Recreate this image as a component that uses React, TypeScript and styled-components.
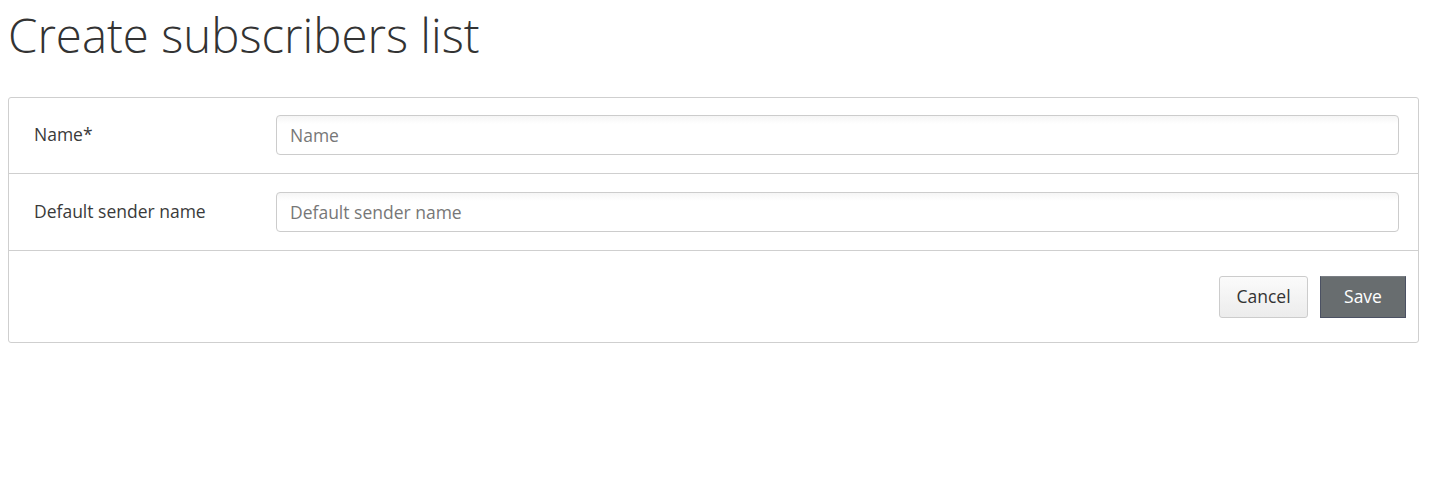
import React from "react";
import styled, { createGlobalStyle } from "styled-components";

const Global = createGlobalStyle`
  html, body { margin: 0; padding: 0; background: #fff; }
  body { font-family: "Open Sans", "Liberation Sans", sans-serif; color: #333; }
  * { box-sizing: border-box; }
`;

const Page = styled.div`
  padding: 0 32px 0 8px;
`;

const Title = styled.h1`
  margin: 0;
  padding-top: 5px;
  height: 97px;
  font-family: "Open Sans", sans-serif;
  font-weight: 300;
  font-size: 47.4px;
  line-height: 60px;
  color: #333;
`;

const Card = styled.form`
  border: 1px solid #cfcfcf;
  border-radius: 3px;
  background: #fff;
`;

const Row = styled.div`
  display: grid;
  grid-template-columns: 242px 1fr;
  align-items: center;
  padding: 17.4px 19px 18px 25px;
  border-bottom: 1px solid #cfcfcf;
`;

const Label = styled.label`
  font-size: 17.5px;
  color: #3a3a3a;
  line-height: 24px;
  align-self: start;
  padding-top: 7px;
`;

const Input = styled.input`
  height: 40px;
  width: 100%;
  border: 1px solid #cccccc;
  border-radius: 4px;
  padding: 0 13px;
  font-family: "Open Sans", sans-serif;
  font-size: 17.5px;
  color: #333;
  background: linear-gradient(#f5f5f5, #fff 8px);
  outline: none;
  &::placeholder { color: #777; }
`;

const Footer = styled.div`
  display: flex;
  justify-content: flex-end;
  gap: 12px;
  padding: 25px 12px 24.5px 0;
`;

const Button = styled.button<{ $primary?: boolean; $w: number }>`
  height: 42px;
  width: ${(p) => p.$w}px;
  padding: 0;
  font-family: "Open Sans", sans-serif;
  font-size: 17.5px;
  line-height: 1;
  border-radius: ${(p) => (p.$primary ? "0" : "3px")};
  border: 1px solid ${(p) => (p.$primary ? "#4b5163" : "#cccccc")};
  border-top-color: ${(p) => (p.$primary ? "#7a7e84" : "#cccccc")};
  background: ${(p) => (p.$primary ? "#686d6f" : "linear-gradient(#fbfbfb, #ececec)")};
  color: ${(p) => (p.$primary ? "#fff" : "#333")};
  cursor: pointer;
`;

export default function App() {
  return (
    <Page>
      <Global />
      <Title>Create subscribers list</Title>
      <Card onSubmit={(e) => e.preventDefault()}>
        <Row>
          <Label htmlFor="name">Name*</Label>
          <Input id="name" placeholder="Name" />
        </Row>
        <Row>
          <Label htmlFor="sender">Default sender name</Label>
          <Input id="sender" placeholder="Default sender name" />
        </Row>
        <Footer>
          <Button type="button" $w={89}>Cancel</Button>
          <Button type="submit" $primary $w={86}>Save</Button>
        </Footer>
      </Card>
    </Page>
  );
}
